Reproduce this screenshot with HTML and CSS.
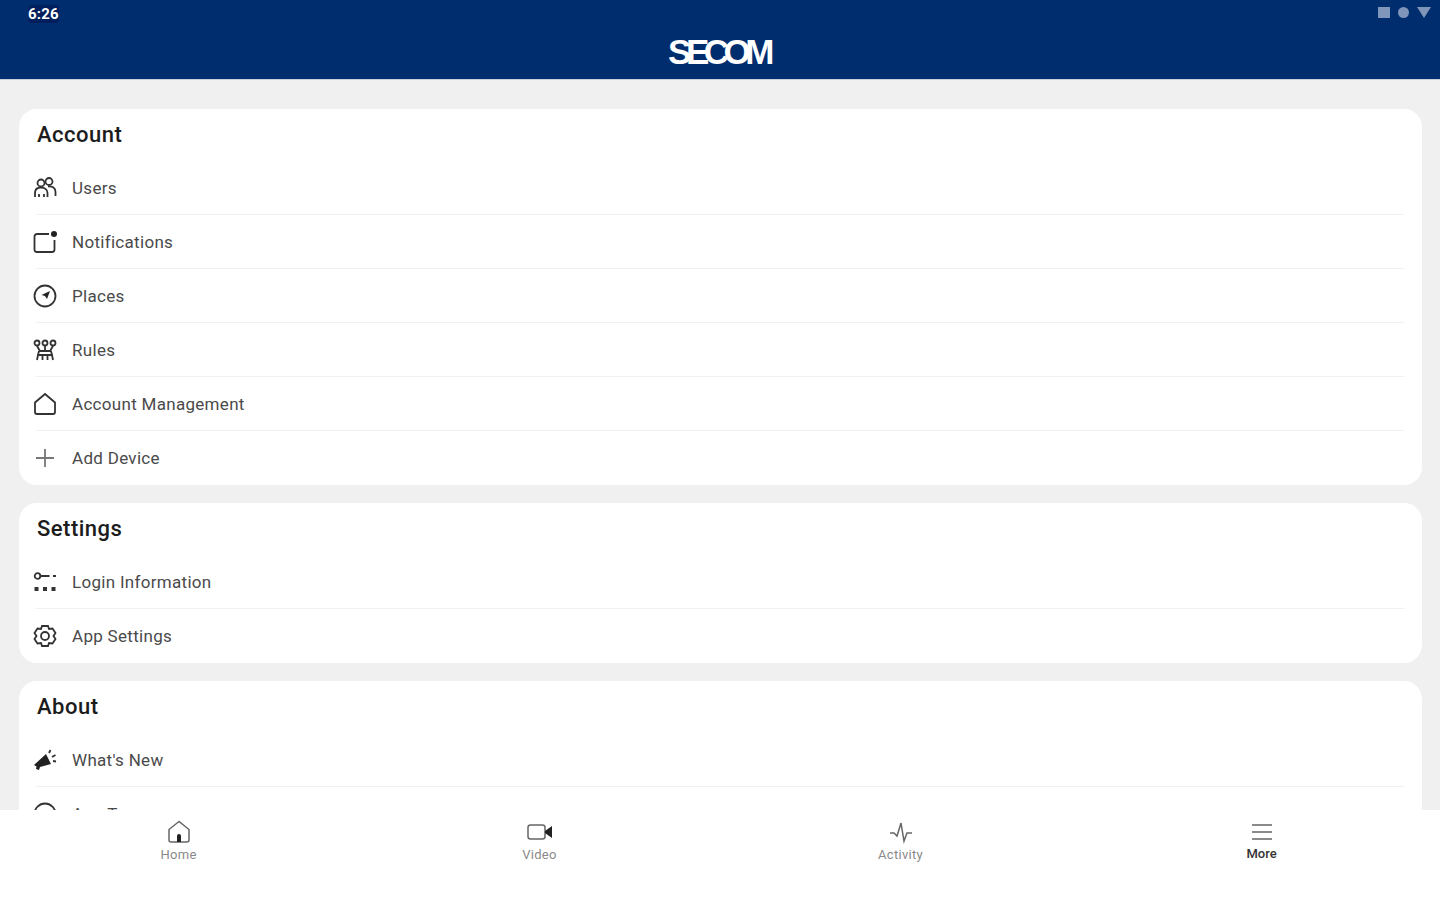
FILE: index.html
```html
<!DOCTYPE html>
<html lang="en">
<head>
    <meta charset="UTF-8">
    <meta name="viewport" content="width=device-width, initial-scale=1.0">
    <title>SECOM</title>
    <link rel="stylesheet" href="styles.css">
</head>
<body>
    <header class="top-bar">
        <div class="status-bar">
            <span class="clock">6:26</span>
            <div class="status-icons">
                <span class="status-square"></span>
                <span class="status-dot"></span>
                <span class="status-triangle"></span>
            </div>
        </div>
        <div class="logo">SECOM</div>
    </header>

    <main class="content">
        <section class="card">
            <h2>Account</h2>
            <div class="row">
                <svg class="icon" viewBox="0 0 24 24"><circle cx="8" cy="7" r="3.5"/><circle cx="16" cy="5.5" r="3.5"/><path d="M2 21v-4c0-3.500 2.500-5.500 6-5.500s6.500 2 6.500 5.500v4M15 10.500c4.500-.5 7.500 1.500 7.500 5.500v4M6 21v-3M11 21v-3"/></svg>
                <span>Users</span>
            </div>
            <div class="row">
                <svg class="icon" viewBox="0 0 24 24"><path d="M16 4H4a2.500 2.500 0 0 0-2.500 2.500v13A2.500 2.500 0 0 0 4 22h15a2.500 2.500 0 0 0 2.500-2.500V10"/><circle class="solid" cx="21" cy="4" r="3"/></svg>
                <span>Notifications</span>
            </div>
            <div class="row">
                <svg class="icon" viewBox="0 0 24 24"><circle cx="12" cy="12" r="10.5"/><path class="solid" d="M17 7l-3 8-2-3-3.500-1z"/></svg>
                <span>Places</span>
            </div>
            <div class="row">
                <svg class="icon" viewBox="0 0 24 24"><circle cx="4" cy="5" r="2.5"/><circle cx="12" cy="5" r="2.5"/><circle cx="20" cy="5" r="2.5"/><path d="M4 8l3 5h10l3-5M12 8v5M6 13l-1 4h14l-1-4M5 17l-1 5M9.500 17v5M14.500 17v5M19 17l1 5"/></svg>
                <span>Rules</span>
            </div>
            <div class="row">
                <svg class="icon" viewBox="0 0 24 24"><path d="M12 2L2 10.500V20a2 2 0 0 0 2 2h16a2 2 0 0 0 2-2v-9.500z"/></svg>
                <span>Account Management</span>
            </div>
            <div class="row">
                <svg class="icon icon-light" viewBox="0 0 24 24"><path d="M12 3v18M3 12h18"/></svg>
                <span>Add Device</span>
            </div>
        </section>

        <section class="card">
            <h2>Settings</h2>
            <div class="row">
                <svg class="icon" viewBox="0 0 24 24"><circle cx="4.5" cy="6" r="2.8"/><path d="M7.500 6h9M20 6h3"/><path class="dots" d="M1.500 17h4v4h-4zM10 17h4v4h-4zM18.500 17h4v4h-4z"/></svg>
                <span>Login Information</span>
            </div>
            <div class="row">
                <svg class="icon" viewBox="0 0 24 24"><path d="M9 2h6l1 3 3.500-.5L22.500 9 20.500 12l2 3-3 4.500L16 19l-1 3H9l-1-3-3.500.5-3-4.500 2-3-2-3 3-4.500L8 5z"/><circle cx="12" cy="12" r="4"/></svg>
                <span>App Settings</span>
            </div>
        </section>

        <section class="card">
            <h2>About</h2>
            <div class="row">
                <svg class="icon" viewBox="0 0 24 24"><path class="solid" d="M1 17l12-11 5 10-11 3-1 3-3-1 .5-2.500z"/><path d="M16 5l1.500-3M19 9l3.500-2M20 13l3 .5"/></svg>
                <span>What's New</span>
            </div>
            <div class="row">
                <svg class="icon" viewBox="0 0 24 24"><circle cx="12" cy="12" r="10.5"/></svg>
                <span>App Tour</span>
            </div>
        </section>
    </main>

    <nav class="tab-bar">
        <div class="tab">
            <svg class="tab-icon" viewBox="0 0 24 24"><path d="M12 1.500L2 9.500V20a2 2 0 0 0 2 2h16a2 2 0 0 0 2-2V9.500z"/><path class="solid" d="M10 22v-6a2 2 0 0 1 4 0v6z"/></svg>
            <span>Home</span>
        </div>
        <div class="tab">
            <svg class="tab-icon" viewBox="0 0 26 24"><rect x="1" y="5" width="17" height="14" rx="2.5"/><path class="solid" d="M18 11l7-5v12l-7-5z"/></svg>
            <span>Video</span>
        </div>
        <div class="tab">
            <svg class="tab-icon" viewBox="0 0 24 24"><path d="M1 13h4l3 3 4-13 3 18 3-8h5"/></svg>
            <span>Activity</span>
        </div>
        <div class="tab tab-active">
            <svg class="tab-icon" viewBox="0 0 24 24"><path d="M2 5h20M2 12h20M2 19h20"/></svg>
            <span>More</span>
        </div>
    </nav>
</body>
</html>
```

FILE: styles.css
```css
* {
    box-sizing: border-box;
}

html, body {
    height: 100%;
}

body {
    margin: 0;
    display: flex;
    flex-direction: column;
    overflow: hidden;
    background-color: #f0f0f0;
    color: #333;
    font-family: Roboto, 'Liberation Sans', sans-serif;
}

.top-bar {
    flex: 0 0 80px;
    padding: 0 9px 0 28px;
    background-color: #002d6d;
    border-bottom: 1px solid #c9cede;
    color: #fff;
}

.status-bar {
    display: flex;
    justify-content: space-between;
    align-items: center;
    height: 27px;
}

.clock {
    font-size: 15px;
    font-weight: 700;
    letter-spacing: 0.2px;
    background-color: #001f5c;
    border-radius: 4px;
}

.status-icons {
    display: flex;
    align-items: center;
    gap: 8px;
    margin-bottom: 2px;
}

.status-square {
    width: 12px;
    height: 11px;
    background-color: #7f95ba;
}

.status-dot {
    width: 11px;
    height: 11px;
    border-radius: 50%;
    background-color: #7f95ba;
}

.status-triangle {
    width: 0;
    height: 0;
    border-left: 7px solid transparent;
    border-right: 7px solid transparent;
    border-top: 11px solid #7f95ba;
}

.logo {
    margin: 5px 22px 0 0;
    text-align: center;
    font-family: 'Liberation Sans', sans-serif;
    font-size: 35px;
    line-height: 40px;
    font-weight: 700;
    letter-spacing: -5.5px;
}

.content {
    flex: 1;
    min-height: 0;
    overflow: hidden;
    padding: 29px 18px 0 19px;
}

.card {
    margin-bottom: 18px;
    padding: 0 18px 0 17px;
    background-color: #fff;
    border-radius: 18px;
}

.card h2 {
    margin: 0 0 0 1px;
    height: 52px;
    line-height: 52px;
    font-size: 22px;
    font-weight: 500;
    letter-spacing: 0.5px;
    color: #1c1c1c;
}

.row {
    display: flex;
    align-items: center;
    gap: 15px;
    height: 54px;
    border-bottom: 1px solid #f1f1f1;
    font-size: 17px;
    letter-spacing: 0.3px;
    color: #4a4a4a;
}

.row:last-child {
    border-bottom: none;
}

.icon {
    flex: none;
    width: 24px;
    height: 24px;
    margin-left: -3px;
    fill: none;
    stroke: #333;
    stroke-width: 1.8;
}

.icon-light {
    stroke: #777;
}

.solid {
    fill: #222;
    stroke: none;
}

.dots {
    fill: #333;
    stroke: none;
}

.tab-bar {
    flex: 0 0 90px;
    display: grid;
    grid-template-columns: repeat(4, 361px);
    justify-content: start;
    margin-left: -2px;
    background-color: #fff;
}

.tab {
    display: flex;
    flex-direction: column;
    align-items: center;
    gap: 3px;
    padding-top: 10px;
    font-size: 13px;
    line-height: 15px;
    letter-spacing: 0.3px;
    color: #8a8a8a;
}

.tab-icon {
    width: 26px;
    height: 24px;
    fill: none;
    stroke: #666;
    stroke-width: 1.5;
}

.tab-active {
    gap: 2px;
    font-weight: 500;
    letter-spacing: 0;
    color: #333;
}
```
